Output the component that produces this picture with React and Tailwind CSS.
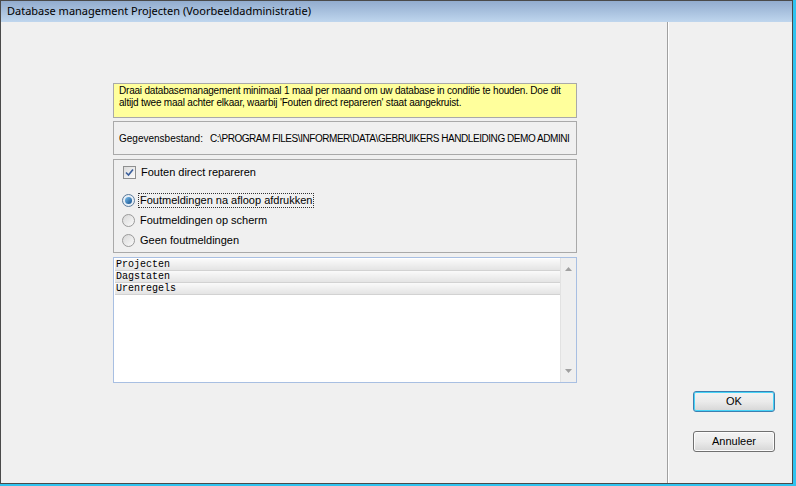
import React from "react";

const Radio = ({ checked, label, focused }) => (
  <div className="flex items-center h-[20px]">
    <span
      className={`w-[13px] h-[13px] rounded-full border flex items-center justify-center ${
        checked ? "border-[#5c7a99] bg-[#e6eef6]" : "border-[#9a9a9a] bg-gradient-to-br from-[#d8d8d8] to-[#fafafa]"
      }`}
    >
      {checked && (
        <span className="w-[7px] h-[7px] rounded-full bg-gradient-to-br from-[#7bc0ef] to-[#0f4f8c]" />
      )}
    </span>
    <span
      className={`ml-[3px] px-[1px] leading-[13px] ${
        focused ? "border border-dotted border-[#333]" : "border border-transparent"
      }`}
    >
      {label}
    </span>
  </div>
);

const ListRow = ({ text }) => (
  <div className="h-[12px] flex items-center bg-gradient-to-b from-[#fafafa] to-[#e4e4e4] border-b border-[#d2d2d2] pl-[1px] font-['Liberation_Mono',monospace] text-[10px] leading-[11px] text-black">
    {text}
  </div>
);

const Button = ({ children, isDefault }) => (
  <button
    className={`w-[82px] h-[21px] rounded-[3px] border text-[11px] text-black bg-gradient-to-b from-[#f3f3f3] via-[#ebebeb] to-[#d6d6d6] ${
      isDefault
        ? "border-[#3c7fb1] shadow-[inset_0_0_0_1px_#48d4f7]"
        : "border-[#707070] shadow-[inset_0_0_0_1px_#fcfcfc]"
    }`}
  >
    {children}
  </button>
);

export default function App() {
  return (
    <div className="w-[796px] h-[486px] overflow-hidden bg-white">
      <div className="w-full h-full border-r-[3px] border-b-2 border-[#2fc3ef]">
        <div className="w-full h-full flex flex-col border border-[#4a4a4a] bg-[#f0f0f0] font-['Liberation_Sans',Arial,sans-serif]">
          {/* title bar */}
          <div className="h-[21px] shrink-0 flex items-center pl-[6px] bg-gradient-to-b from-[#92acce] to-[#bfd6ee] font-['Noto_Sans',sans-serif] text-[11px] text-black">
            Database management Projecten (Voorbeeldadministratie)
          </div>

          <div className="flex flex-1 min-h-0">
            {/* left panel */}
            <div className="w-[666px] shrink-0 pt-[61px] pl-[112px]">
              <div className="w-[464px] flex flex-col">
                <div className="h-[35px] border border-[#a9a9a9] bg-[#ffff9c] px-[5px] pt-[1px] text-[10px] leading-[12px] text-black tracking-[-0.2px]">
                  Draai databasemanagement minimaal 1 maal per maand om uw database in conditie te houden. Doe dit altijd
                  twee maal achter elkaar, waarbij 'Fouten direct repareren' staat aangekruist.
                </div>

                <div className="mt-[3px] h-[34px] border border-[#a9a9a9] flex items-center px-[5px] text-[10px] text-black whitespace-nowrap overflow-hidden">
                  <span className="w-[91px] shrink-0">Gegevensbestand:</span>
                  <span className="tracking-[-0.45px]">
                    C:\PROGRAM FILES\INFORMER\DATA\GEBRUIKERS HANDLEIDING DEMO ADMINI
                  </span>
                </div>

                <div className="mt-[4px] h-[94px] border border-[#a9a9a9] pl-[8px] pt-[6px] text-[11px] text-black">
                  <div className="flex items-center h-[13px] ml-[1px]">
                    <span className="w-[13px] h-[13px] border border-[#8e8f8f] bg-gradient-to-br from-[#dcdcdc] to-[#fbfbfb] flex items-center justify-center">
                      <svg width="9" height="9" viewBox="0 0 9 9">
                        <path d="M1 4.5 L3.5 7 L8 1.5" stroke="#3b5f9c" strokeWidth="1.6" fill="none" />
                      </svg>
                    </span>
                    <span className="ml-[5px]">Fouten direct repareren</span>
                  </div>
                  <div className="mt-[11px] flex flex-col">
                    <Radio checked focused label="Foutmeldingen na afloop afdrukken" />
                    <Radio label="Foutmeldingen op scherm" />
                    <Radio label="Geen foutmeldingen" />
                  </div>
                </div>

                <div className="mt-[4px] h-[126px] border border-[#a8bfe2] bg-white flex">
                  <div className="flex-1 pl-[1px] pt-[1px]">
                    <ListRow text="Projecten" />
                    <ListRow text="Dagstaten" />
                    <ListRow text="Urenregels" />
                  </div>
                  <div className="w-[16px] bg-[#efefef] border-l border-[#e2e2e2] flex flex-col items-center justify-between py-[9px]">
                    <svg width="7" height="4" viewBox="0 0 7 4">
                      <path d="M0 4 L3.5 0 L7 4 Z" fill="#a0a0a0" />
                    </svg>
                    <svg width="7" height="4" viewBox="0 0 7 4">
                      <path d="M0 0 L7 0 L3.5 4 Z" fill="#a0a0a0" />
                    </svg>
                  </div>
                </div>
              </div>
            </div>

            {/* separator */}
            <div className="w-[1px] bg-[#a0a0a0]" />
            <div className="w-[1px] bg-white" />

            {/* right panel */}
            <div className="flex-1 flex flex-col justify-end items-start pl-[24px] pb-[31px] gap-[19px]">
              <Button isDefault>OK</Button>
              <Button>Annuleer</Button>
            </div>
          </div>
        </div>
      </div>
    </div>
  );
}
